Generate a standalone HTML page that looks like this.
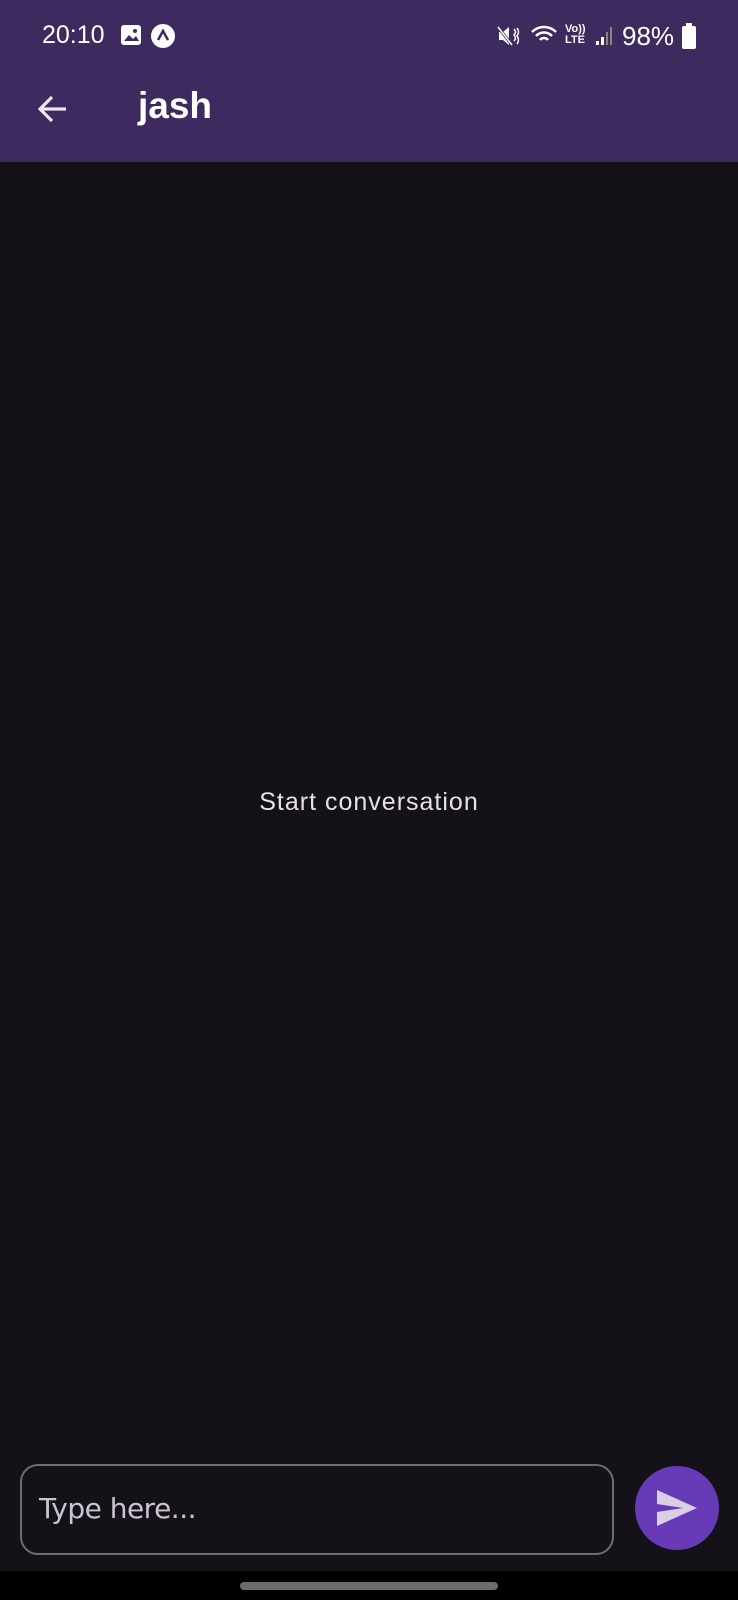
<!DOCTYPE html>
<html><head><meta charset="utf-8"><style>
*{margin:0;padding:0;box-sizing:border-box}
body{width:738px;height:1600px;background:#141218;font-family:"Liberation Sans",sans-serif;position:relative;overflow:hidden}
.top{position:absolute;left:0;top:0;width:738px;height:162px;background:#3d2a5e}
.t{position:absolute;color:#fff}
.input{position:absolute;left:20px;top:1464px;width:594px;height:91px;border:2px solid #6f6c74;border-radius:18px}
.send{position:absolute;left:635px;top:1466px;width:84px;height:84px;border-radius:50%;background:#673ab7}
.nav{position:absolute;left:0;top:1571px;width:738px;height:29px;background:#000}
.handle{position:absolute;left:240px;top:1582px;width:258px;height:8px;border-radius:4px;background:#6c6c6c}
</style></head><body>
<div class="top"></div>
<div class="t" style="left:42px;top:21px;font-size:25px">20:10</div>
<svg style="position:absolute;left:120px;top:24px" width="22" height="22" viewBox="0 0 22 22"><rect x="1" y="1" width="20" height="20" rx="3" fill="#fff"/><path d="M4 17l5-6 4 4 3-3 3 5z" fill="#3d2a5e"/><circle cx="15" cy="7" r="2" fill="#3d2a5e"/></svg>
<svg style="position:absolute;left:150px;top:23px" width="26" height="26" viewBox="0 0 26 26"><circle cx="13" cy="13" r="12" fill="#fff"/><path d="M8 17l5-9 5 9" stroke="#3d2a5e" stroke-width="2.5" fill="none"/></svg>
<svg style="position:absolute;left:497px;top:25px" width="24" height="22" viewBox="0 0 24 22"><path d="M2 7h4l6-5v18l-6-5H2z" fill="#fff"/><path d="M1 2l14 18" stroke="#3d2a5e" stroke-width="3"/><path d="M1 2l14 18" stroke="#fff" stroke-width="1.5"/><path d="M17 4q3 3 0 6q3 3 0 6M20 3q3 4 0 8q3 4 0 8" stroke="#fff" stroke-width="1.5" fill="none"/></svg>
<svg style="position:absolute;left:530px;top:24px" width="30" height="24" viewBox="0 0 30 24"><path d="M2 8a17 17 0 0 1 24 0M6 12a11 11 0 0 1 16 0M10 16a5 5 0 0 1 8 0" stroke="#fff" stroke-width="2.5" fill="none"/></svg>
<div class="t" style="left:565px;top:24px;font-size:11px;line-height:11px;font-weight:bold">Vo))<br>LTE</div>
<svg style="position:absolute;left:595px;top:26px" width="20" height="20" viewBox="0 0 20 20"><rect x="1" y="15" width="3" height="4" fill="#fff"/><rect x="6" y="11" width="3" height="8" fill="#fff"/><rect x="11" y="6" width="2" height="13" fill="#887"/><rect x="15" y="1" width="2" height="18" fill="#887"/></svg>
<div class="t" style="left:622px;top:21px;font-size:26px">98%</div>
<svg style="position:absolute;left:681px;top:23px" width="16" height="26" viewBox="0 0 16 26"><rect x="5" y="0" width="6" height="3" fill="#fff"/><rect x="1" y="3" width="14" height="23" rx="2" fill="#fff"/></svg>
<svg style="position:absolute;left:36px;top:92px" width="34" height="34" viewBox="0 0 34 34"><path d="M30 17H5M16 5L4 17l12 12" stroke="#ece6f0" stroke-width="3.2" fill="none"/></svg>
<div class="t" style="left:138px;top:85px;font-size:37px;font-weight:bold">jash</div>
<div class="t" style="left:0;width:738px;text-align:center;top:788px;font-size:25px;color:#e6e0e9;letter-spacing:1px">Start conversation</div>
<div class="input"></div>
<div class="t" style="left:39px;top:1492px;font-size:28px;color:#cac4d0;font-family:'DejaVu Sans',sans-serif;letter-spacing:-0.5px">Type here...</div>
<div class="send"><svg style="position:absolute;left:21px;top:22px" width="42" height="40" viewBox="0 0 42 40"><path d="M1 2l40 18L1 38l0-14 26-4L1 16z" fill="#d9d0e8"/></svg></div>
<div class="nav"></div><div class="handle"></div>
</body></html>
